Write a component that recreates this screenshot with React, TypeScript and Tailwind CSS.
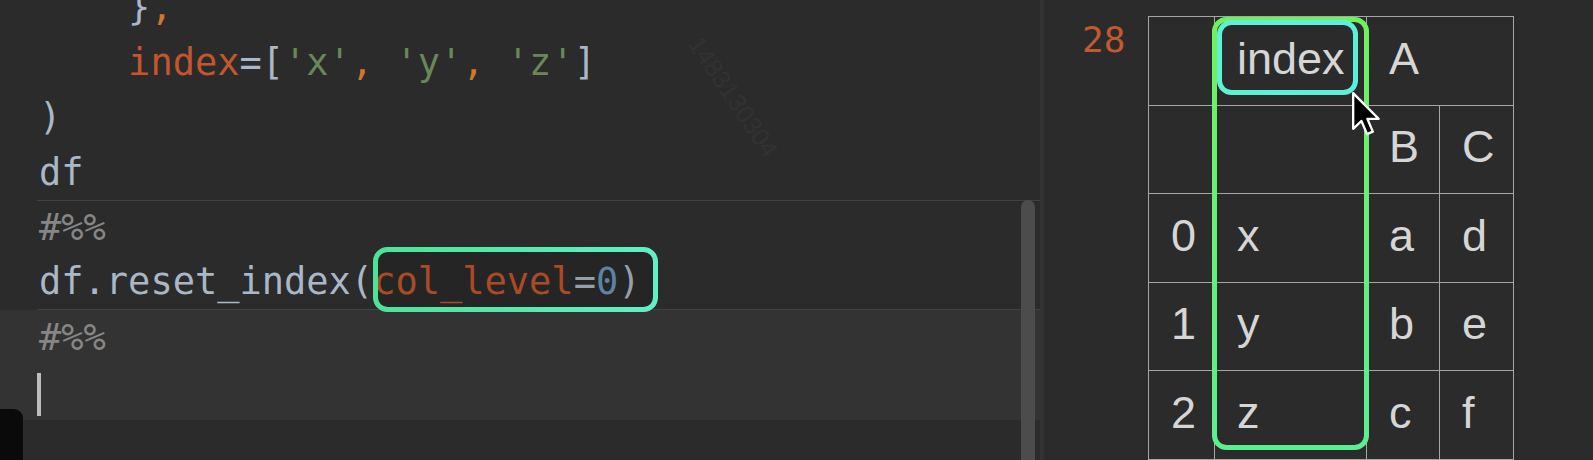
import React from "react";

const code = "font-['DejaVu_Sans_Mono',monospace] text-[37px]";

type Tok = { t: string; c: string };

const plain = "text-[#a9b7c6]";
const arg = "text-[#c2562d]";
const comma = "text-[#cc7832]";
const str = "text-[#6a8759]";
const num = "text-[#6897bb]";
const magic = "text-[#868686]";

const cell1: Tok[][] = [
  [{ t: "    }", c: plain }, { t: ",", c: comma }],
  [
    { t: "    index", c: arg },
    { t: "=[", c: plain },
    { t: "'x'", c: str },
    { t: ", ", c: comma },
    { t: "'y'", c: str },
    { t: ", ", c: comma },
    { t: "'z'", c: str },
    { t: "]", c: plain },
  ],
  [{ t: ")", c: plain }],
  [{ t: "df", c: plain }],
];

const cell2: Tok[][] = [
  [{ t: "#%%", c: magic }],
  [
    { t: "df.reset_index(", c: plain },
    { t: "col_level", c: arg },
    { t: "=", c: plain },
    { t: "0", c: num },
    { t: ")", c: plain },
  ],
];

function Line({ toks, h }: { toks: Tok[]; h: string }) {
  return (
    <div className={`${h} whitespace-pre pl-[39px]`}>
      {toks.map((tok, i) => (
        <span key={i} className={tok.c}>{tok.t}</span>
      ))}
    </div>
  );
}

function Box({ x, y, w, h, from, to, id, vertical, fill }: {
  x: number; y: number; w: number; h: number; from: string; to: string; id: string; vertical?: boolean; fill?: string;
}) {
  return (
    <svg className="pointer-events-none absolute" style={{ left: x, top: y }} width={w} height={h}>
      <defs>
        <linearGradient id={id} x1="0" y1="0" x2={vertical ? "0" : "1"} y2={vertical ? "1" : "0"}>
          <stop offset="0" stopColor={from} />
          <stop offset="1" stopColor={to} />
        </linearGradient>
      </defs>
      <rect x="2.5" y="2.5" width={w - 5} height={h - 5} rx="12" fill={fill ?? "none"} stroke={`url(#${id})`} strokeWidth="5" />
    </svg>
  );
}

const td = "border border-[#a6a6a6] pl-[22px] pb-[6px] align-middle text-left font-normal";

const rows = [
  ["0", "x", "a", "d"],
  ["1", "y", "b", "e"],
  ["2", "z", "c", "f"],
];

export default function App() {
  return (
    <div className="relative flex h-[460px] w-[1593px] overflow-hidden bg-[#2b2b2b]">
      {/* editor */}
      <div className="relative h-full w-[1040px] overflow-hidden">
        <div className={`${code} -mt-[20px] leading-[55px]`}>
          {cell1.map((l, i) => <Line key={i} toks={l} h="h-[55px]" />)}
          <div className="ml-[37px] h-px bg-[#414141]" />
          <div className="leading-[54px]">
            {cell2.map((l, i) => <Line key={i} toks={l} h="h-[54px]" />)}
          </div>
          <div className="ml-[37px] h-px bg-[#414141]" />
          <div className="bg-[#333333]">
            <Line toks={[{ t: "#%%", c: magic }]} h="h-[55px]" />
            <div className="flex h-[55px] items-center pl-[37px] pt-[4px]">
              <div className="h-[43px] w-[4px] bg-[#bdbdbd]" />
            </div>
          </div>
        </div>

        <div className="absolute left-[733px] top-[97px] -translate-x-1/2 -translate-y-1/2 rotate-[56deg] font-['Liberation_Sans',sans-serif] text-[25px] whitespace-nowrap text-[#323232]">
          1483130304
        </div>

        <div className="absolute left-[1021px] top-[200px] h-[300px] w-[14px] rounded-t-full bg-[#4c4c4c]" />

        <Box x={373} y={247} w={285} h={65} from="#4de396" to="#60f0c6" id="g1" fill="rgba(0,0,0,0.12)" />

        <div className="absolute left-0 top-[409px] h-[60px] w-[23px] rounded-tr-[9px] bg-[#0a0a0a]" />
      </div>

      <div className="h-full w-[4px] bg-[#333333]" />

      {/* output */}
      <div className="flex flex-1 items-start pl-[38px]">
        <div className="mt-[22px] w-[66px] font-['DejaVu_Sans_Mono',monospace] text-[36px] leading-none text-[#c2592f]">28</div>
        <table className="mt-[16px] table-fixed border-collapse font-['Liberation_Sans',Arial,sans-serif] text-[45px] leading-none text-[#d6d6d6]">
          <colgroup>
            <col className="w-[66px]" />
            <col className="w-[152px]" />
            <col className="w-[73px]" />
            <col className="w-[74px]" />
          </colgroup>
          <thead>
            <tr className="h-[89px]">
              <th className={td}></th>
              <th className={td}>index</th>
              <th className={td} colSpan={2}>A</th>
            </tr>
            <tr className="h-[88px]">
              <th className={td}></th>
              <th className={td}></th>
              <th className={td}>B</th>
              <th className={td}>C</th>
            </tr>
          </thead>
          <tbody>
            {rows.map((r, i) => (
              <tr key={i} className={i % 2 === 0 ? "h-[89px]" : "h-[88px]"}>
                {r.map((v, j) => <td key={j} className={td}>{v}</td>)}
              </tr>
            ))}
          </tbody>
        </table>
      </div>

      <Box x={1212} y={17} w={157} h={433} from="#6ef25c" to="#5aef8f" id="g2" vertical />
      <Box x={1217} y={20} w={141} h={75} from="#5ef2d2" to="#5cf0da" id="g3" />

      <svg className="pointer-events-none absolute left-[1351px] top-[91px]" width="32" height="48" viewBox="0 0 22 33">
        <path d="M1.5 1.5 L1.5 26 L7.2 20.6 L11 29.6 L15 27.9 L11.3 19.2 L19 19.2 Z" fill="#000" stroke="#fff" strokeWidth="1.6" strokeLinejoin="round" />
      </svg>
    </div>
  );
}
